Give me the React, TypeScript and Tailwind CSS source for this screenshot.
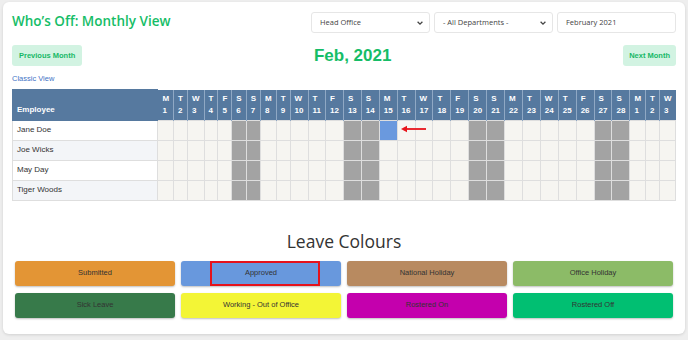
import React from "react";

const days = [
  ["M", "1"], ["T", "2"], ["W", "3"], ["T", "4"], ["F", "5"], ["S", "6"], ["S", "7"],
  ["M", "8"], ["T", "9"], ["W", "10"], ["T", "11"], ["F", "12"], ["S", "13"], ["S", "14"],
  ["M", "15"], ["T", "16"], ["W", "17"], ["T", "18"], ["F", "19"], ["S", "20"], ["S", "21"],
  ["M", "22"], ["T", "23"], ["W", "24"], ["T", "25"], ["F", "26"], ["S", "27"], ["S", "28"],
  ["M", "1"], ["T", "2"], ["W", "3"],
];

const employees = ["Jane Doe", "Joe Wicks", "May Day", "Tiger Woods"];

const legend = [
  { label: "Submitted", bg: "bg-[#e39535]" },
  { label: "Approved", bg: "bg-[#6898dd]", mark: true },
  { label: "National Holiday", bg: "bg-[#b88a60]" },
  { label: "Office Holiday", bg: "bg-[#8cbb67]" },
  { label: "Sick Leave", bg: "bg-[#377a4a]" },
  { label: "Working - Out of Office", bg: "bg-[#f3f536]" },
  { label: "Rostered On", bg: "bg-[#c400ad]" },
  { label: "Rostered Off", bg: "bg-[#01bf72]" },
];

function Chevron() {
  return (
    <svg width="8" height="8" viewBox="0 0 10 10" fill="none" stroke="#444" strokeWidth="1.6">
      <path d="M2 3.5 L5 6.5 L8 3.5" />
    </svg>
  );
}

function SelectBox({ text, chevron = true }: { text: string; chevron?: boolean }) {
  return (
    <div className="w-[119px] h-[21px] border border-[#e6e6e6] rounded-[3px] bg-white flex items-center justify-between pl-[8px] pr-[5px] text-[7.5px] text-[#444]">
      <span>{text}</span>
      {chevron && <Chevron />}
    </div>
  );
}

export default function App() {
  const poppins = { fontFamily: "'Open Sans', 'Noto Sans', sans-serif" };
  return (
    <div className="w-[688px] h-[340px] bg-[#eeeeee] pt-[2px] px-[3px] overflow-hidden">
      <div className="bg-white rounded-[6px] shadow-[0_1px_3px_rgba(0,0,0,0.12)] h-[332px] px-[9px] pt-[9px]" style={{ fontFamily: "'Liberation Sans', Arial, sans-serif" }}>
        <div className="flex justify-between items-start">
          <h1 className="text-[13.5px] leading-[18px] font-semibold text-[#16bd67] mt-[1px]" style={poppins}>
            Who’s Off: Monthly View
          </h1>
          <div className="flex gap-[4px] mt-[1px]" style={poppins}>
            <SelectBox text="Head Office" />
            <SelectBox text="- All Departments -" />
            <SelectBox text="February 2021" chevron={false} />
          </div>
        </div>

        <div className="flex justify-between items-center mt-[12px]">
          <div className="h-[21px] px-[7px] rounded-[3px] bg-[#d2f3e2] text-[#17b866] text-[7.5px] font-bold flex items-center">
            Previous Month
          </div>
          <div className="text-[17px] font-bold text-[#16bd67] leading-[21px]">Feb, 2021</div>
          <div className="h-[21px] px-[6px] rounded-[3px] bg-[#d2f3e2] text-[#17b866] text-[7.5px] font-bold flex items-center">
            Next Month
          </div>
        </div>

        <div className="mt-[8px] text-[7.5px] text-[#3f73c6] leading-[10px]">Classic View</div>

        <div className="relative mt-[5px]">
          <table className="w-full border-collapse">
            <thead>
              <tr className="bg-[#56799f]">
                <th className="text-left align-bottom text-white text-[8px] font-bold px-[4px] pb-[4px] border border-[#56799f]">
                  Employee
                </th>
                {days.map((d, i) => (
                  <th
                    key={i}
                    className="w-px whitespace-nowrap text-left align-top text-white text-[8px] font-bold px-[4px] py-[3px] leading-[12px] border-l border-[#8fa8c4]"
                  >
                    <div>{d[0]}</div>
                    <div>{d[1]}</div>
                  </th>
                ))}
              </tr>
            </thead>
            <tbody>
              {employees.map((name, r) => (
                <tr key={name} className="h-[20px]">
                  <td className={`text-[8px] text-[#333] px-[4px] border border-[#dedede] ${r % 2 === 1 ? "bg-[#f3f5f8]" : "bg-white"}`}>
                    {name}
                  </td>
                  {days.map((d, i) => {
                    const weekend = i < 28 && d[0] === "S";
                    const approved = r === 0 && i === 14;
                    const bg = approved ? "bg-[#6a99de]" : weekend ? "bg-[#a3a3a3]" : "bg-[#f6f5f1]";
                    return <td key={i} className={`border border-[#dedede] ${bg}`} />;
                  })}
                </tr>
              ))}
            </tbody>
          </table>
          <svg className="absolute left-[389px] top-[36px]" width="26" height="8" viewBox="0 0 26 8">
            <path d="M4 4 H25" stroke="#e8141a" strokeWidth="1.8" />
            <path d="M0 4 L6 0.8 L6 7.2 Z" fill="#e8141a" />
          </svg>
        </div>

        <h2 className="text-center text-[17.5px] font-medium text-[#333] mt-[30px] leading-[20px]" style={poppins}>
          Leave Colours
        </h2>

        <div className="grid grid-cols-4 gap-x-[6px] gap-y-[7px] mx-[3px] mt-[10px]">
          {legend.map((l) => (
            <div
              key={l.label}
              className={`relative h-[25px] rounded-[3px] ${l.bg} shadow-[0_1px_2px_rgba(0,0,0,0.25)] flex items-center justify-center text-[7.5px] text-[#333]`}
            >
              {l.mark && (
                <div className="absolute left-[29px] top-[0px] w-[110px] h-[25px] border-2 border-[#e5121b]" />
              )}
              <span className="relative">{l.label}</span>
            </div>
          ))}
        </div>
      </div>
    </div>
  );
}
